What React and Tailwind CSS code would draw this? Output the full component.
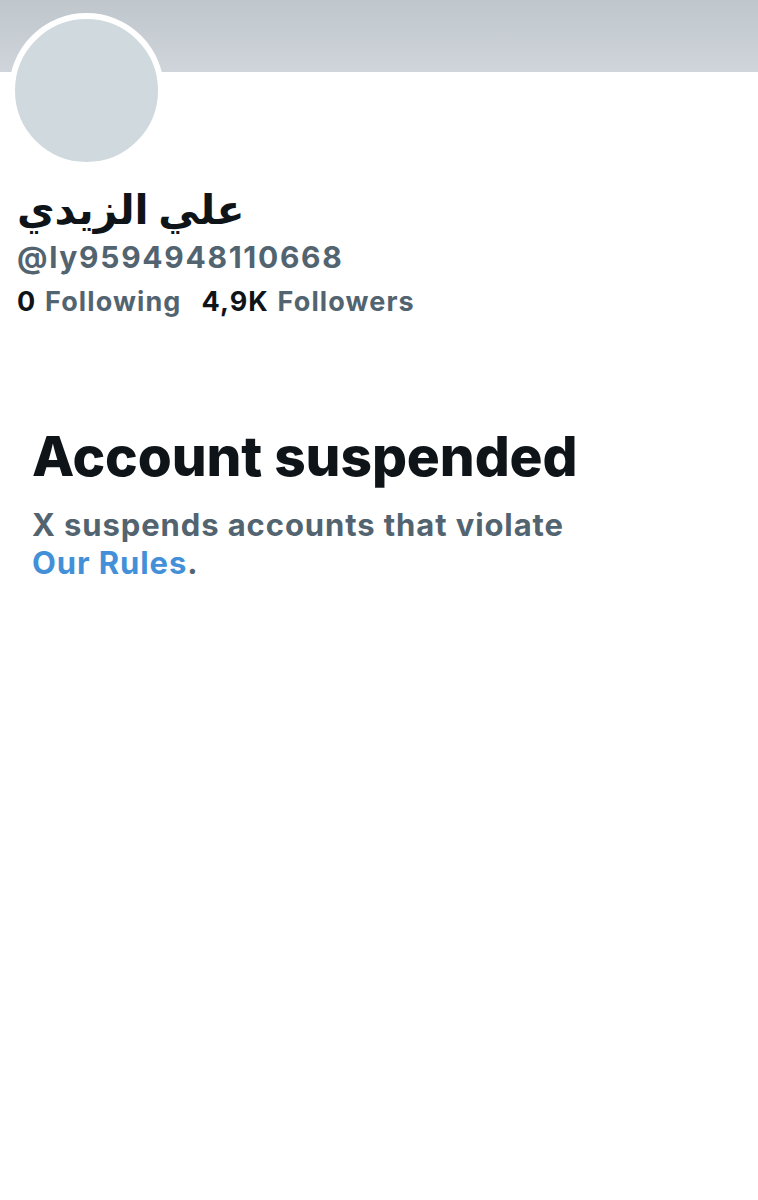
import React from 'react';

export default function App() {
  return (
    <div className="min-h-[1200px] w-[758px] bg-white" style={{ fontFamily: 'Inter, "DejaVu Sans", sans-serif' }}>
      {/* Banner */}
      <div className="h-[72px] w-full bg-gradient-to-b from-[#bfc6cc] to-[#cfd5da]" />

      <div className="px-[17px]">
        {/* Avatar */}
        <div className="-mt-[59px] -ml-[8px] h-[155px] w-[155px] rounded-full border-[6px] border-white bg-[#cfd9de]" />

        {/* Profile info */}
        <div className="mt-[16px]">
          <h1 className="text-[41px] font-bold leading-[50px] text-[#0f1419]" dir="rtl" style={{ textAlign: 'left' }}>
            علي الزيدي
          </h1>
          <p className="mt-[4px] text-[30px] font-bold leading-[38px] text-[#536471] tracking-[1.7px]">@ly9594948110668</p>
          <div className="mt-[10px] flex items-center gap-[20px] text-[27px] leading-[32px] tracking-[1.1px]">
            <span>
              <span className="font-bold text-[#0f1419]">0</span>{' '}
              <span className="font-bold text-[#536471]">Following</span>
            </span>
            <span>
              <span className="font-bold text-[#0f1419]">4,9K</span>{' '}
              <span className="font-bold text-[#536471]">Followers</span>
            </span>
          </div>
        </div>
      </div>

      {/* Suspended notice */}
      <div className="mt-[106px] px-[32px]">
        <h2 className="text-[55px] font-extrabold leading-[64px] tracking-[-0.1px] text-[#0f1419]">Account suspended</h2>
        <p className="mt-[18px] w-[600px] text-[31px] font-bold leading-[38px] tracking-[0.9px] text-[#536471]">
          X suspends accounts that violate <br />
          <span className="text-[#4390d8]">Our Rules</span>.
        </p>
      </div>
    </div>
  );
}
